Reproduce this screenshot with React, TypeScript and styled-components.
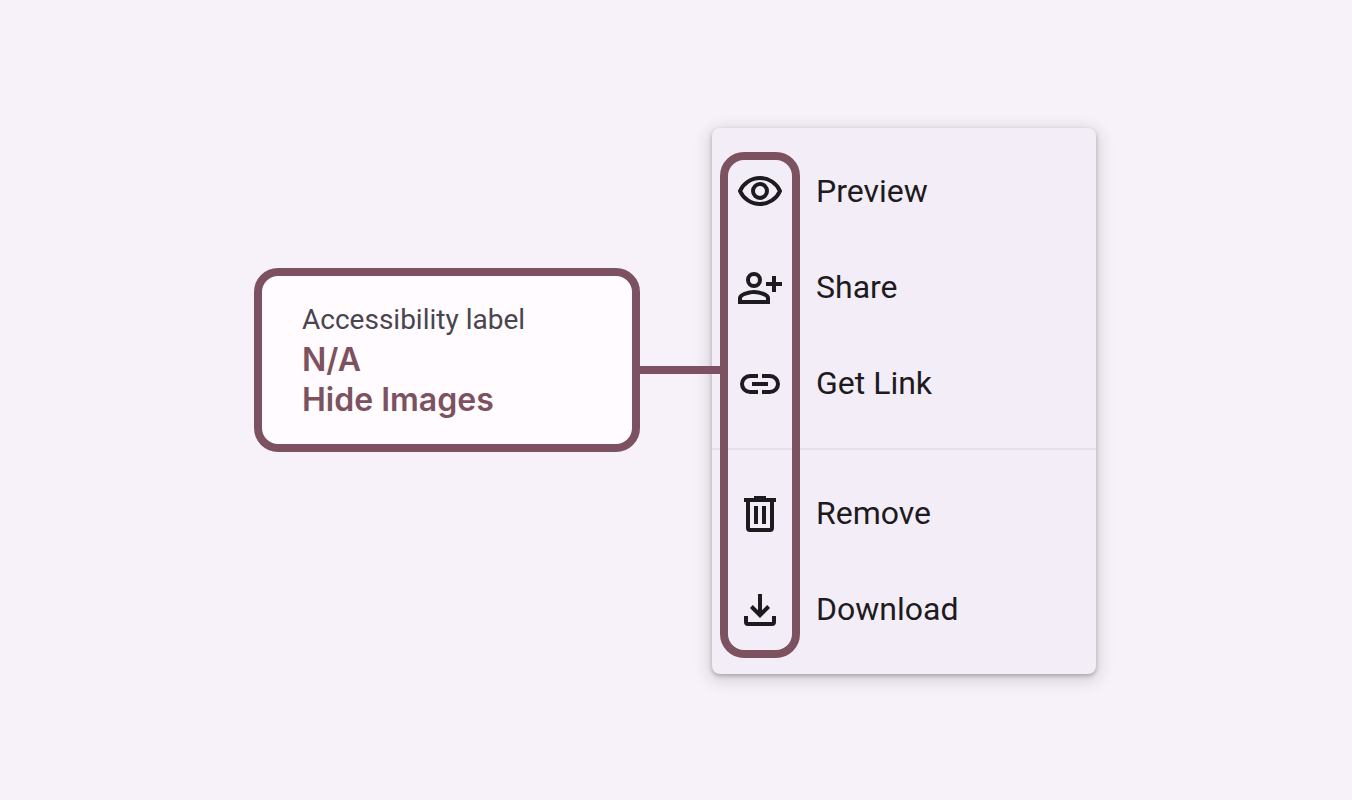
import React from "react";
import styled, { createGlobalStyle } from "styled-components";

const GlobalStyle = createGlobalStyle`
  *, *::before, *::after { box-sizing: border-box; }
  body {
    margin: 0;
    background: #f7f2fa;
    color: #1d1b20;
    font-family: Roboto, sans-serif;
  }
`;

const accent = "#7d5260";

const Stage = styled.main`
  display: flex;
  justify-content: center;
  align-items: flex-start;
  gap: 72px;
  min-height: 100vh;
  padding: 128px 2px 126px 0;
`;

const Callout = styled.section`
  width: 386px;
  margin-top: 140px;
  padding: 24px 40px;
  border: 8px solid ${accent};
  border-radius: 24px;
  background: #fffbfe;
`;

const CalloutTitle = styled.h2`
  margin: 0;
  color: #49454f;
  font: 400 28px/40px Roboto, sans-serif;
`;

const CalloutValue = styled.p`
  margin: 0;
  color: ${accent};
  font: 600 32px/40px Inter, sans-serif;
`;

const MenuPanel = styled.nav`
  position: relative;
  width: 384px;
  padding: 16px 0;
  border-radius: 8px;
  background: #f3edf7;
  box-shadow: 0 2px 4px rgba(0, 0, 0, 0.25), 0 4px 16px 4px rgba(0, 0, 0, 0.12);
`;

const MenuGroup = styled.ul`
  margin: 0;
  padding: 0;
  list-style: none;
`;

const Divider = styled.hr`
  height: 2px;
  margin: 16px 0;
  border: 0;
  background: #e7e0ec;
`;

const MenuButton = styled.button`
  display: flex;
  align-items: center;
  gap: 32px;
  width: 100%;
  height: 96px;
  padding: 0 24px;
  border: 0;
  background: transparent;
  color: inherit;
  font: 400 32px/48px Roboto, sans-serif;
  text-align: left;
  cursor: pointer;
`;

const MenuLabel = styled.span`
  padding-bottom: 2px;
`;

const Glyph = styled.svg`
  flex: none;
  width: 48px;
  height: 48px;
  fill: none;
  stroke: currentColor;
  stroke-width: 2;
`;

/* Outline drawn over the icon column, tied to the callout by a line. */
const IconOutline = styled.div`
  position: absolute;
  top: 24px;
  bottom: 16px;
  left: 8px;
  width: 80px;
  border: 8px solid ${accent};
  border-radius: 24px;
  pointer-events: none;
`;

const Connector = styled.div`
  position: absolute;
  top: 206px;
  right: 100%;
  width: 80px;
  height: 8px;
  margin-right: 8px;
  background: ${accent};
`;

type Item = { label: string; icon: React.ReactNode };

const groups: Item[][] = [
  [
    {
      label: "Preview",
      icon: (
        <>
          <path
            d="M2 11.5C3.7 7.6 7.6 5 12 5s8.3 2.6 10 6.5c-1.7 3.9-5.6 6.5-10 6.5S3.7 15.4 2 11.5z"
            strokeLinejoin="round"
          />
          <circle cx="12" cy="11.5" r="3.5" />
        </>
      ),
    },
    {
      label: "Share",
      icon: (
        <>
          <circle cx="9" cy="8" r="3" />
          <path
            d="M9 13c-2.67 0-8 1.34-8 4v3h16v-3c0-2.66-5.33-4-8-4zm-6 5v-.99C3.2 16.29 6.3 15 9 15s5.8 1.29 6 2v1H3z"
            fill="currentColor"
            stroke="none"
          />
          <path d="M19 6v8M15 10h8" />
        </>
      ),
    },
    {
      label: "Get Link",
      icon: <path d="M11 8H7a4 4 0 0 0 0 8h4M13 8h4a4 4 0 0 1 0 8h-4M8 12h8" />,
    },
  ],
  [
    {
      label: "Remove",
      icon: (
        <>
          <path d="M6 5v14a1 1 0 0 0 1 1h10a1 1 0 0 0 1-1V5M4 5h16M10 8v9M14 8v9" />
          <path d="M9 3h6v1H9z" fill="currentColor" stroke="none" />
        </>
      ),
    },
    {
      label: "Download",
      icon: (
        <>
          <path d="M5 15v3a1 1 0 0 0 1 1h12a1 1 0 0 0 1-1v-3" />
          <path
            d="M12 16l-5-5 1.4-1.45 2.6 2.6V4h2v8.15l2.6-2.6L17 11z"
            fill="currentColor"
            stroke="none"
          />
        </>
      ),
    },
  ],
];

export default function App() {
  return (
    <>
      <GlobalStyle />
      <Stage>
        <Callout>
          <CalloutTitle>Accessibility label</CalloutTitle>
          <CalloutValue>N/A</CalloutValue>
          <CalloutValue>Hide Images</CalloutValue>
        </Callout>
        <MenuPanel>
          {groups.map((items, index) => (
            <React.Fragment key={index}>
              {index > 0 && <Divider />}
              <MenuGroup>
                {items.map(({ label, icon }) => (
                  <li key={label}>
                    <MenuButton type="button">
                      <Glyph viewBox="0 0 24 24" aria-hidden="true">
                        {icon}
                      </Glyph>
                      <MenuLabel>{label}</MenuLabel>
                    </MenuButton>
                  </li>
                ))}
              </MenuGroup>
            </React.Fragment>
          ))}
          <IconOutline>
            <Connector />
          </IconOutline>
        </MenuPanel>
      </Stage>
    </>
  );
}
